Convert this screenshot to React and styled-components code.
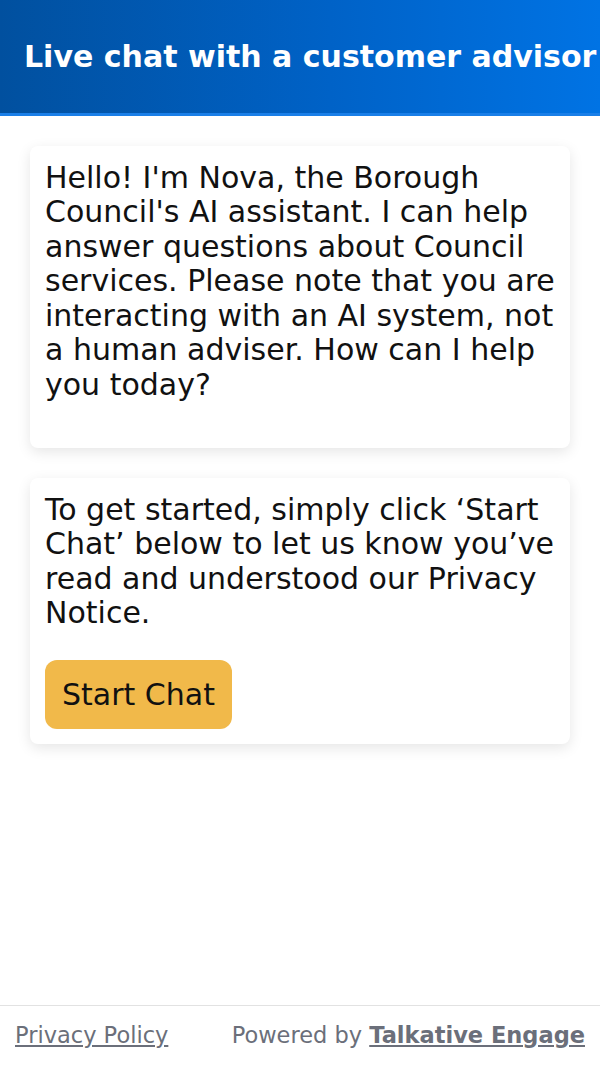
import React from "react";
import styled, { createGlobalStyle } from "styled-components";

const GlobalStyle = createGlobalStyle`
  html, body {
    margin: 0;
    padding: 0;
    background: #ffffff;
    font-family: "DejaVu Sans", "Noto Sans", sans-serif;
  }
  #root {
    height: 100vh;
  }
`;

const Page = styled.div`
  height: 100vh;
  display: flex;
  flex-direction: column;
  overflow: hidden;
`;

const Header = styled.header`
  height: 113px;
  flex-shrink: 0;
  display: flex;
  align-items: center;
  padding-left: 24px;
  background: linear-gradient(90deg, #01509f 0%, #0062c7 55%, #0073e4 100%);
  border-bottom: 3px solid #1a7fe8;
  overflow: hidden;
  white-space: nowrap;
`;

const Title = styled.h1`
  margin: 0;
  color: #ffffff;
  font-size: 30px;
  font-weight: bold;
`;

const Messages = styled.main`
  flex: 1;
  display: flex;
  flex-direction: column;
  gap: 30px;
  padding: 30px 30px 0;
`;

const Card = styled.div`
  background: #ffffff;
  border-radius: 8px;
  box-shadow: 0 4px 14px rgba(0, 0, 0, 0.1);
  padding: 14.5px 15px ${(p) => p.$bottom || "15px"};
  color: #111111;
  font-size: 30px;
  line-height: 34.5px;
`;

const Text = styled.p`
  margin: 0;
`;

const StartButton = styled.button`
  margin-top: 29.5px;
  background: #f1b94a;
  border: none;
  border-radius: 12px;
  padding: 0 17px;
  height: 69px;
  font-family: inherit;
  font-size: 30px;
  color: #111111;
  cursor: pointer;
`;

const Footer = styled.footer`
  flex-shrink: 0;
  height: 57px;
  border-top: 1px solid #e2e2e2;
  display: flex;
  align-items: center;
  justify-content: space-between;
  padding: 0 15px 2px;
  font-size: 22.5px;
  color: #6b6f7a;
`;

const FooterLink = styled.a`
  color: #6b6f7a;
  text-decoration: underline;
  font-weight: ${(p) => (p.$bold ? "bold" : "normal")};
`;

export default function App() {
  return (
    <>
      <GlobalStyle />
      <Page>
        <Header>
          <Title>Live chat with a customer advisor</Title>
        </Header>
        <Messages>
          <Card $bottom="46px">
            <Text>
              Hello! I'm Nova, the Borough Council's AI assistant. I can help
              answer questions about Council services. Please note that you are
              interacting with an AI system, not a human adviser. How can I help
              you today?
            </Text>
          </Card>
          <Card>
            <Text>
              To get started, simply click ‘Start Chat’ below to let us know
              you’ve read and understood our Privacy Notice.
            </Text>
            <StartButton>Start Chat</StartButton>
          </Card>
        </Messages>
        <Footer>
          <FooterLink href="#">Privacy Policy</FooterLink>
          <span>
            Powered by <FooterLink href="#" $bold>Talkative Engage</FooterLink>
          </span>
        </Footer>
      </Page>
    </>
  );
}
